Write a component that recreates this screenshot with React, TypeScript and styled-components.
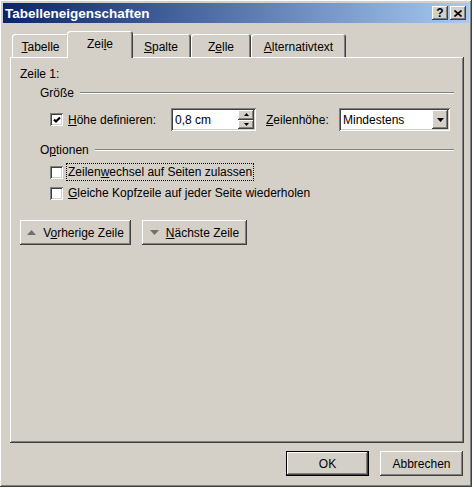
import styled, { createGlobalStyle } from 'styled-components';

const GlobalStyle = createGlobalStyle`
  body {
    margin: 0;
    background: #ffffff;
    font-family: 'Liberation Sans', Arial, sans-serif;
    font-size: 12px;
    color: #000;
  }
`;

const raised = `
  box-shadow: inset -1px -1px #404040, inset 1px 1px #ffffff,
    inset -2px -2px #808080, inset 2px 2px #d4d0c8;
`;

const sunken = `
  box-shadow: inset 1px 1px #808080, inset -1px -1px #ffffff,
    inset 2px 2px #404040, inset -2px -2px #d4d0c8;
`;

const Window = styled.div`
  box-sizing: border-box;
  width: 472px;
  height: 487px;
  padding: 3px;
  background: #d4d0c8;
  ${raised}
  display: flex;
  flex-direction: column;
`;

const TitleBar = styled.div`
  height: 20px;
  display: flex;
  align-items: center;
  justify-content: space-between;
  padding: 0 3px 0 2px;
  background: linear-gradient(to right, #0a246a, #a6caf0);
`;

const Title = styled.span`
  color: #fff;
  font-weight: bold;
  font-size: 13.5px;
`;

const Caps = styled.div`
  display: flex;
  gap: 2px;
`;

const CapButton = styled.div`
  width: 16px;
  height: 14px;
  background: #d4d0c8;
  ${raised}
  display: flex;
  align-items: center;
  justify-content: center;
  font-weight: bold;
  font-size: 12px;
  line-height: 1;
`;

const Body = styled.div`
  flex: 1;
  display: flex;
  flex-direction: column;
  padding: 8px 5px 0 7px;
`;

const TabStrip = styled.div`
  height: 26px;
  display: flex;
  align-items: flex-end;
  padding-left: 2px;
  position: relative;
  z-index: 1;
`;

const Tab = styled.div<{ $w: number; $active?: boolean }>`
  box-sizing: border-box;
  width: ${(p) => p.$w + (p.$active ? 4 : 0)}px;
  height: ${(p) => (p.$active ? 27 : 23)}px;
  margin: 0 ${(p) => (p.$active ? -2 : 0)}px ${(p) => (p.$active ? -1 : 0)}px;
  padding-top: 6px;
  text-align: center;
  background: #d4d0c8;
  border-radius: 3px 3px 0 0;
  box-shadow: inset 1px 1px #ffffff, inset -1px 0 #404040, inset -2px 0 #808080;
  position: relative;
  z-index: ${(p) => (p.$active ? 2 : 0)};
`;

const Panel = styled.div`
  box-sizing: border-box;
  width: 454px;
  height: 386px;
  padding: 10px 10px;
  ${raised}
  display: flex;
  flex-direction: column;
`;

const Line = styled.div`
  height: 14px;
  line-height: 14px;
  white-space: nowrap;
`;

const Group = styled.div`
  margin-left: 20px;
  display: flex;
  flex-direction: column;
`;

const GroupHead = styled.div<{ $top: number }>`
  display: flex;
  align-items: center;
  height: 14px;
  margin-top: ${(p) => p.$top}px;
`;

const Rule = styled.div`
  flex: 1;
  height: 0;
  margin-left: 6px;
  border-top: 1px solid #808080;
  border-bottom: 1px solid #ffffff;
`;

const Row = styled.div<{ $top: number; $h: number }>`
  display: flex;
  align-items: center;
  height: ${(p) => p.$h}px;
  margin-top: ${(p) => p.$top}px;
  padding-left: 10px;
`;

const Check = styled.div`
  box-sizing: border-box;
  width: 13px;
  height: 13px;
  flex: none;
  background: #fff;
  ${sunken}
  display: flex;
  align-items: center;
  justify-content: center;
`;

const Label = styled.span<{ $w?: number; $gap?: number; $focus?: boolean }>`
  display: inline-block;
  ${(p) => (p.$w ? `width: ${p.$w}px;` : '')}
  margin-left: ${(p) => p.$gap ?? 4}px;
  padding: 1px 1px;
  white-space: nowrap;
  outline: ${(p) => (p.$focus ? '1px dotted #000' : 'none')};
`;

const Field = styled.div<{ $w: number }>`
  box-sizing: border-box;
  width: ${(p) => p.$w}px;
  height: 23px;
  flex: none;
  background: #fff;
  ${sunken}
  padding: 2px;
  display: flex;
  align-items: center;
`;

const FieldText = styled.span`
  flex: 1;
  padding-left: 2px;
`;

const Spinner = styled.div`
  width: 16px;
  height: 100%;
  display: flex;
  flex-direction: column;
`;

const SpinPart = styled.div`
  flex: 1;
  background: #d4d0c8;
  ${raised}
  display: flex;
  align-items: center;
  justify-content: center;
`;

const DropBtn = styled.div`
  width: 16px;
  height: 100%;
  background: #d4d0c8;
  ${raised}
  display: flex;
  align-items: center;
  justify-content: center;
`;

const Button = styled.div<{ $w: number; $default?: boolean }>`
  box-sizing: border-box;
  width: ${(p) => p.$w}px;
  height: 25px;
  background: #d4d0c8;
  display: flex;
  align-items: center;
  justify-content: center;
  gap: 7px;
  ${(p) =>
    p.$default
      ? `border: 1px solid #000;
         box-shadow: inset -1px -1px #404040, inset 1px 1px #ffffff,
           inset -2px -2px #808080, inset 2px 2px #d4d0c8;`
      : raised}
`;

const NavRow = styled.div`
  display: flex;
  gap: 11px;
  margin-top: 17px;
`;

const Footer = styled.div`
  display: flex;
  justify-content: flex-end;
  gap: 11px;
  margin-top: 8px;
  padding-right: 1px;
`;

const U = styled.span`
  text-decoration: underline;
`;

function Tri({ down, color = '#000', w = 7 }: { down?: boolean; color?: string; w?: number }) {
  const h = Math.ceil(w / 2);
  const pts = down ? `0,0 ${w},0 ${w / 2},${h}` : `0,${h} ${w},${h} ${w / 2},0`;
  return (
    <svg width={w} height={h} viewBox={`0 0 ${w} ${h}`}>
      <polygon points={pts} fill={color} />
    </svg>
  );
}

export default function App() {
  return (
    <>
      <GlobalStyle />
      <Window>
        <TitleBar>
          <Title>Tabelleneigenschaften</Title>
          <Caps>
            <CapButton>?</CapButton>
            <CapButton>
              <svg width="8" height="7" viewBox="0 0 8 7">
                <path d="M0.5 0.5 L7.5 6.5 M7.5 0.5 L0.5 6.5" stroke="#000" strokeWidth="1.6" />
              </svg>
            </CapButton>
          </Caps>
        </TitleBar>
        <Body>
          <TabStrip>
            <Tab $w={57}><U>T</U>abelle</Tab>
            <Tab $w={62} $active>Zei<U>l</U>e</Tab>
            <Tab $w={60}><U>S</U>palte</Tab>
            <Tab $w={60}>Z<U>e</U>lle</Tab>
            <Tab $w={95}><U>A</U>lternativtext</Tab>
          </TabStrip>
          <Panel>
            <Line>Zeile 1:</Line>
            <Group>
              <GroupHead $top={5}>
                Größe
                <Rule />
              </GroupHead>
              <Row $top={8} $h={23}>
                <Check>
                  <svg width="8" height="8" viewBox="0 0 8 8">
                    <path d="M1 3.5 L3 5.5 L7 1.5" stroke="#000" strokeWidth="2.2" fill="none" />
                  </svg>
                </Check>
                <Label $w={102} $gap={4}><U>H</U>öhe definieren:</Label>
                <Field $w={85}>
                  <FieldText>0,8 cm</FieldText>
                  <Spinner>
                    <SpinPart><Tri w={5} /></SpinPart>
                    <SpinPart><Tri w={5} down /></SpinPart>
                  </Spinner>
                </Field>
                <Label $w={72} $gap={9}><U>Z</U>eilenhöhe:</Label>
                <Field $w={111}>
                  <FieldText>Mindestens</FieldText>
                  <DropBtn><Tri w={7} down /></DropBtn>
                </Field>
              </Row>
              <GroupHead $top={12}>
                O<U>p</U>tionen
                <Rule />
              </GroupHead>
              <Row $top={5} $h={20}>
                <Check />
                <Label $gap={4} $focus>Zeilen<U>w</U>echsel auf Seiten zulassen</Label>
              </Row>
              <Row $top={1} $h={20}>
                <Check />
                <Label $gap={4}><U>G</U>leiche Kopfzeile auf jeder Seite wiederholen</Label>
              </Row>
            </Group>
            <NavRow>
              <Button $w={111}>
                <Tri w={9} color="#6f6f6f" />
                <span>V<U>o</U>rherige Zeile</span>
              </Button>
              <Button $w={105}>
                <Tri w={9} color="#6f6f6f" down />
                <span><U>N</U>ächste Zeile</span>
              </Button>
            </NavRow>
          </Panel>
          <Footer>
            <Button $w={83} $default>OK</Button>
            <Button $w={83}>Abbrechen</Button>
          </Footer>
        </Body>
      </Window>
    </>
  );
}
